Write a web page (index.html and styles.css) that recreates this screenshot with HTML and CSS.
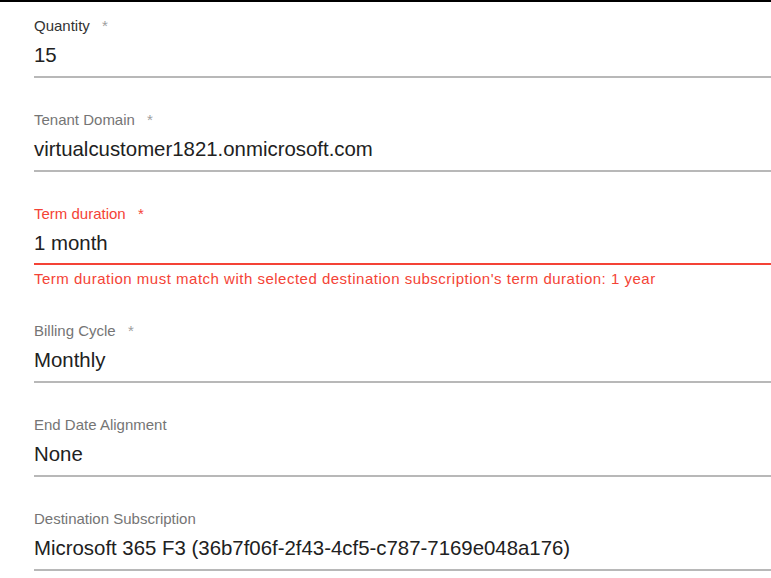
FILE: index.html
```html
<!DOCTYPE html>
<html lang="en">
<head>
  <meta charset="UTF-8">
  <meta name="viewport" content="width=device-width, initial-scale=1.0">
  <title>Change subscription</title>
  <link rel="stylesheet" href="styles.css">
</head>
<body>
  <div class="form">
    <div class="field focused">
      <div class="label">Quantity <span class="req">*</span></div>
      <div class="value">15</div>
    </div>
    <div class="field">
      <div class="label">Tenant Domain <span class="req">*</span></div>
      <div class="value">virtualcustomer1821.onmicrosoft.com</div>
    </div>
    <div class="field invalid">
      <div class="label">Term duration <span class="req">*</span></div>
      <div class="value">1 month</div>
    </div>
    <div class="error">Term duration must match with selected destination subscription's term duration: 1 year</div>
    <div class="field">
      <div class="label">Billing Cycle <span class="req">*</span></div>
      <div class="value">Monthly</div>
    </div>
    <div class="field">
      <div class="label">End Date Alignment</div>
      <div class="value">None</div>
    </div>
    <div class="field">
      <div class="label">Destination Subscription</div>
      <div class="value">Microsoft 365 F3 (36b7f06f-2f43-4cf5-c787-7169e048a176)</div>
    </div>
  </div>
</body>
</html>
```

FILE: styles.css
```css
body {
  font-family: "Liberation Sans", Arial, sans-serif;
  background-color: #fff;
  margin: 0;
  padding: 0;
  border-top: 2px solid #000;
  overflow: hidden;
}

.form {
  margin-left: 34px;
}

.field {
  padding-top: 33px;
  padding-bottom: 9px;
  border-bottom: 2px solid #b8b8b8;
}

.field:first-child {
  padding-top: 15px;
}

.label {
  font-size: 15px;
  line-height: 18px;
  color: #757575;
}

.req {
  margin-left: 8px;
  color: #9e9e9e;
}

.value {
  margin-top: 8px;
  font-size: 20.4px;
  line-height: 24px;
  color: #212121;
}

.focused .label {
  color: #333;
}

.invalid {
  padding-bottom: 8px;
  border-bottom-color: #f44336;
}

.invalid .label,
.invalid .req {
  color: #f44336;
}

.error {
  margin-top: 6px;
  margin-bottom: 2px;
  font-size: 15px;
  line-height: 16px;
  letter-spacing: 0.5px;
  color: #f44336;
}
```
